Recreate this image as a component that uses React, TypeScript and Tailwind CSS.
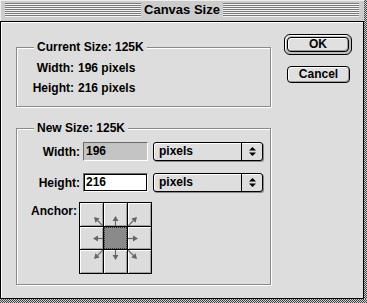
import React from "react";

const dirs: [number, number][] = [
	[-1, -1], [0, -1], [1, -1],
	[-1, 0], [0, 0], [1, 0],
	[-1, 1], [0, 1], [1, 1],
];

const Arrow = ({ dx, dy }: { dx: number; dy: number }) => {
	const c = 11.5;
	const sx = c - dx * c;
	const sy = c - dy * c;
	const len = dx && dy ? 9 : 10;
	const tx = sx + dx * len;
	const ty = sy + dy * len;
	const n = Math.hypot(dx, dy);
	const ux = dx / n;
	const uy = dy / n;
	const bx = tx - ux * 5;
	const by = ty - uy * 5;
	const px = -uy * 3;
	const py = ux * 3;
	return (
		<svg width="23" height="23" viewBox="0 0 23 23" className="block">
			<line x1={sx} y1={sy} x2={bx} y2={by} stroke="#6a6a6a" strokeWidth="1.2" />
			<polygon
				points={`${tx},${ty} ${bx + px},${by + py} ${bx - px},${by - py}`}
				fill="#666"
			/>
		</svg>
	);
};

const Popup = () => (
	<div className="ml-[5px] flex h-[19px] w-[110px] rounded-[3px] border border-black bg-[#dedede] shadow-[1px_1px_0_#8a8a8a,inset_1px_1px_0_#fff]">
		<span className="flex-1 pl-[5px] leading-[17px]">pixels</span>
		<span className="flex w-[21px] items-center justify-center border-l border-black">
			<svg width="7" height="9" viewBox="0 0 7 9">
				<polygon points="0,3.5 3.5,0 7,3.5" fill="#000" />
				<polygon points="0,5.5 3.5,9 7,5.5" fill="#000" />
			</svg>
		</span>
	</div>
);

export default function App() {
	return (
		<div className="flex h-[303px] w-[367px] flex-col bg-[#dddddd] font-['Liberation_Sans',Arial,sans-serif] text-[12px] font-bold text-black">
			<div className="flex h-[299px]">
				<div className="flex w-[364px] flex-col">
					{/* title bar */}
					<div className="flex h-[22px] items-start border-b border-black bg-[#cccccc] px-[5px] pt-[3px] shadow-[inset_1px_1px_0_#eee]">
						<div className="h-[14px] flex-1 bg-[repeating-linear-gradient(180deg,#7a7a7a_0px,#7a7a7a_1px,#f4f4f4_1px,#f4f4f4_2px)]" />
						<span className="px-[3px] text-[13px] leading-[14px]">Canvas Size</span>
						<div className="h-[14px] flex-1 bg-[repeating-linear-gradient(180deg,#7a7a7a_0px,#7a7a7a_1px,#f4f4f4_1px,#f4f4f4_2px)]" />
					</div>

					{/* body */}
					<div className="flex flex-1 border-x border-b border-black shadow-[inset_1px_1px_0_#fff]">
						<div className="ml-[15px] mt-[18px] w-[255px]">
							<fieldset className="h-[67px] border border-[#8a8a8a] shadow-[1px_1px_0_#fff,inset_1px_1px_0_#fff]">
								<legend className="ml-[17px] bg-[#dddddd] px-[3px] leading-[14px]">
									Current Size: 125K
								</legend>
								<div className="mt-[4px] grid grid-cols-[57px_1fr] gap-x-[4px] leading-[20px]">
									<span className="text-right">Width:</span>
									<span>196 pixels</span>
									<span className="text-right">Height:</span>
									<span>216 pixels</span>
								</div>
							</fieldset>

							<fieldset className="mt-[14px] h-[164px] border border-[#8a8a8a] shadow-[1px_1px_0_#fff,inset_1px_1px_0_#fff]">
								<legend className="ml-[17px] bg-[#dddddd] px-[3px] leading-[14px]">
									New Size: 125K
								</legend>
								<div className="mt-[7px] flex items-center">
									<span className="w-[63px] text-right">Width:</span>
									<div className="ml-[3px] h-[19px] w-[65px] border border-t-[#6a6a6a] border-l-[#6a6a6a] border-b-white border-r-white bg-[#c4c4c4] pl-[2px] leading-[17px]">
										196
									</div>
									<Popup />
								</div>
								<div className="mt-[12px] flex items-center">
									<span className="w-[63px] text-right">Height:</span>
									<div className="ml-[3px] h-[19px] w-[65px] border border-t-[#6a6a6a] border-l-[#6a6a6a] border-b-white border-r-white bg-white pl-[2px] leading-[17px] shadow-[inset_1px_1px_0_#000,inset_-1px_-1px_0_#000]">
										216
									</div>
									<Popup />
								</div>
								<div className="mt-[10px] flex items-start">
									<span className="w-[60px] pt-[2px] text-right leading-[14px]">Anchor:</span>
									<div className="ml-[2px] grid grid-cols-[23px_23px_23px] grid-rows-[23px_22px_23px] gap-px border border-black bg-black">
										{dirs.map(([dx, dy], i) =>
											dx === 0 && dy === 0 ? (
												<div
													key={i}
													className="border border-dotted border-[#333] bg-[#8a8a8a]"
												/>
											) : (
												<div
													key={i}
													className="overflow-hidden bg-[#dcdcdc] shadow-[inset_1px_1px_0_#fff,inset_-1px_-1px_0_#a0a0a0]"
												>
													<Arrow dx={dx} dy={dy} />
												</div>
											),
										)}
									</div>
								</div>
							</fieldset>
						</div>

						{/* buttons */}
						<div className="ml-[13px] mt-[12px] flex flex-col items-start">
							<div className="rounded-[6px] border border-black bg-[#bdbdbd] p-[2px] shadow-[inset_1px_1px_0_#fff]">
								<div className="h-[15px] w-[62px] rounded-[4px] border border-black bg-[#e0e0e0] text-center leading-[13px] shadow-[inset_1px_1px_0_#fff,inset_-1px_-1px_0_#999]">
									OK
								</div>
							</div>
							<div className="ml-[3px] mt-[11px] h-[17px] w-[63px] rounded-[4px] border border-black bg-[#e0e0e0] text-center leading-[15px] shadow-[inset_1px_1px_0_#fff,inset_-1px_-1px_0_#999]">
								Cancel
							</div>
						</div>
					</div>
				</div>
				<div className="w-[3px] bg-[repeating-conic-gradient(#444_0_25%,#cfcfcf_0_50%)] bg-[length:2px_2px]" />
			</div>
			<div className="h-[4px] bg-[repeating-conic-gradient(#444_0_25%,#cfcfcf_0_50%)] bg-[length:2px_2px]" />
		</div>
	);
}
